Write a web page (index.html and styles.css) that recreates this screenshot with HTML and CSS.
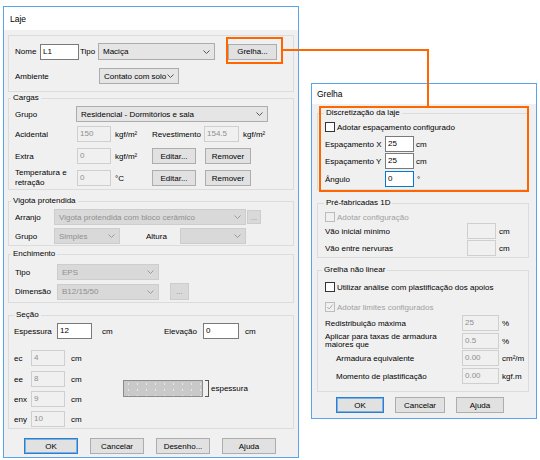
FILE: index.html
```html
<!DOCTYPE html>
<html lang="pt">
<head>
<meta charset="utf-8">
<title>Laje / Grelha</title>
<link rel="stylesheet" href="styles.css">
</head>
<body>
<div class="desk">

  <section class="win win-laje">
    <header class="titlebar">Laje</header>
    <div class="body">
      <div class="topbox">
        <div class="row row-17">
          <span class="lbl w25">Nome</span>
          <span class="field w39">L1</span>
          <span class="lbl w18 ml1">Tipo</span>
          <span class="combo w117 h17">Maciça<svg class="chev" viewBox="0 0 7 4" width="7" height="4"><polyline points="0.5,0.5 3.5,3.5 6.5,0.5"/></svg></span>
          <span class="btn w49 ml13">Grelha...</span>
        </div>
        <div class="row mt8">
          <span class="lbl w84">Ambiente</span>
          <span class="combo w80">Contato com solo<svg class="chev" viewBox="0 0 7 4" width="7" height="4"><polyline points="0.5,0.5 3.5,3.5 6.5,0.5"/></svg></span>
        </div>
      </div>

      <fieldset class="group g-cargas">
        <legend>Cargas</legend>
        <div class="row">
          <span class="lbl w61">Grupo</span>
          <span class="combo w192">Residencial - Dormitórios e sala<svg class="chev" viewBox="0 0 7 4" width="7" height="4"><polyline points="0.5,0.5 3.5,3.5 6.5,0.5"/></svg></span>
        </div>
        <div class="row mt4">
          <span class="lbl w62">Acidental</span>
          <span class="field off w34">150</span>
          <span class="unit w37 ml4">kgf/m²</span>
          <span class="lbl w52">Revestimento</span>
          <span class="field off w35">154.5</span>
          <span class="unit ml4">kgf/m²</span>
        </div>
        <div class="row mt6">
          <span class="lbl w62">Extra</span>
          <span class="field off w34">0</span>
          <span class="unit w37 ml4">kgf/m²</span>
          <span class="btn w44">Editar...</span>
          <span class="btn w46 ml9">Remover</span>
        </div>
        <div class="row row-20 mt4">
          <span class="lbl w62 two">Temperatura e<br>retração</span>
          <span class="field off w34">0</span>
          <span class="unit w37 ml4">°C</span>
          <span class="btn w44">Editar...</span>
          <span class="btn w46 ml9">Remover</span>
        </div>
      </fieldset>

      <fieldset class="group g-vigota">
        <legend>Vigota protendida</legend>
        <div class="row">
          <span class="lbl w39">Arranjo</span>
          <span class="combo off w192">Vigota protendida com bloco cerâmico<svg class="chev" viewBox="0 0 7 4" width="7" height="4"><polyline points="0.5,0.5 3.5,3.5 6.5,0.5"/></svg></span>
          <span class="btn off w14 h14 ml1">...</span>
        </div>
        <div class="row mt3">
          <span class="lbl w39">Grupo</span>
          <span class="combo off w66">Simples<svg class="chev" viewBox="0 0 7 4" width="7" height="4"><polyline points="0.5,0.5 3.5,3.5 6.5,0.5"/></svg></span>
          <span class="lbl w34 ml26">Altura</span>
          <span class="combo off w66"><svg class="chev" viewBox="0 0 7 4" width="7" height="4"><polyline points="0.5,0.5 3.5,3.5 6.5,0.5"/></svg></span>
        </div>
      </fieldset>

      <fieldset class="group g-enchimento">
        <legend>Enchimento</legend>
        <div class="row">
          <span class="lbl w42">Tipo</span>
          <span class="combo off w102">EPS<svg class="chev" viewBox="0 0 7 4" width="7" height="4"><polyline points="0.5,0.5 3.5,3.5 6.5,0.5"/></svg></span>
        </div>
        <div class="row row-17 mt3">
          <span class="lbl w42">Dimensão</span>
          <span class="combo off w102">B12/15/50<svg class="chev" viewBox="0 0 7 4" width="7" height="4"><polyline points="0.5,0.5 3.5,3.5 6.5,0.5"/></svg></span>
          <span class="btn off w19 h17 ml11">...</span>
        </div>
      </fieldset>

      <fieldset class="group g-secao">
        <legend>Seção</legend>
        <div class="row">
          <span class="lbl w43">Espessura</span>
          <span class="field w35">12</span>
          <span class="unit w62 ml10">cm</span>
          <span class="lbl w39">Elevação</span>
          <span class="field w36">0</span>
          <span class="unit ml6">cm</span>
        </div>
        <div class="sec-lower">
          <div class="sec-col">
            <div class="row"><span class="lbl w17">ec</span><span class="field off w34">4</span><span class="unit ml6">cm</span></div>
            <div class="row mt5"><span class="lbl w17">ee</span><span class="field off w34">8</span><span class="unit ml6">cm</span></div>
            <div class="row mt4"><span class="lbl w17">enx</span><span class="field off w34">9</span><span class="unit ml6">cm</span></div>
            <div class="row mt4"><span class="lbl w17">eny</span><span class="field off w34">10</span><span class="unit ml6">cm</span></div>
          </div>
          <div class="slab"></div>
          <div class="bracket"></div>
          <span class="unit ml2">espessura</span>
        </div>
      </fieldset>

      <div class="btnbar btnbar-laje">
        <span class="btn default w54">OK</span>
        <span class="btn w54">Cancelar</span>
        <span class="btn w54">Desenho...</span>
        <span class="btn w54">Ajuda</span>
      </div>
    </div>
  </section>

  <section class="win win-grelha">
    <header class="titlebar">Grelha</header>
    <div class="body">
      <fieldset class="group g-disc">
        <legend>Discretização da laje</legend>
        <div class="row chkrow">
          <span class="chk"></span>
          <span class="lbl ml2">Adotar espaçamento configurado</span>
        </div>
        <div class="row mt4">
          <span class="lbl w60">Espaçamento X</span>
          <span class="field w29">25</span>
          <span class="unit ml2">cm</span>
        </div>
        <div class="row mt1">
          <span class="lbl w60">Espaçamento Y</span>
          <span class="field w29">25</span>
          <span class="unit ml2">cm</span>
        </div>
        <div class="row mt2">
          <span class="lbl w60">Ângulo</span>
          <span class="field focus w29">0</span>
          <span class="unit ml3">°</span>
        </div>
      </fieldset>

      <fieldset class="group g-pre">
        <legend>Pré-fabricadas 1D</legend>
        <div class="row chkrow">
          <span class="chk off"></span>
          <span class="lbl ml2 dim">Adotar configuração</span>
        </div>
        <div class="row mt1">
          <span class="lbl w142">Vão inicial mínimo</span>
          <span class="field off w29"></span>
          <span class="unit ml3">cm</span>
        </div>
        <div class="row mt1">
          <span class="lbl w142">Vão entre nervuras</span>
          <span class="field off w29"></span>
          <span class="unit ml3">cm</span>
        </div>
      </fieldset>

      <fieldset class="group g-nlin">
        <legend>Grelha não linear</legend>
        <div class="row chkrow">
          <span class="chk"></span>
          <span class="lbl ml2">Utilizar análise com plastificação dos apoios</span>
        </div>
        <div class="row chkrow mt10">
          <span class="chk off"><svg viewBox="0 0 10 10" width="8" height="8"><polyline points="1.5,5 4,7.5 8.5,2"/></svg></span>
          <span class="lbl ml2 dim">Adotar limites configurados</span>
        </div>
        <div class="row mt3">
          <span class="lbl w137">Redistribuição máxima</span>
          <span class="field off w37">25</span>
          <span class="unit ml3">%</span>
        </div>
        <div class="row mt2">
          <span class="lbl w137 tight">Aplicar para taxas de armadura<br>maiores que</span>
          <span class="field off w37">0.5</span>
          <span class="unit ml3">%</span>
        </div>
        <div class="row mt1">
          <span class="lbl w137 indent">Armadura equivalente</span>
          <span class="field off w37">0.00</span>
          <span class="unit ml3">cm²/m</span>
        </div>
        <div class="row mt2">
          <span class="lbl w137 indent">Momento de plastificação</span>
          <span class="field off w37">0.00</span>
          <span class="unit ml3">kgf.m</span>
        </div>
      </fieldset>

      <div class="btnbar btnbar-grelha">
        <span class="btn default w48">OK</span>
        <span class="btn w50">Cancelar</span>
        <span class="btn w48">Ajuda</span>
      </div>
    </div>
  </section>

  <div class="hl hl-btn"></div>
  <div class="hl hl-group"></div>
  <div class="wire wire-h"></div>
  <div class="wire wire-v"></div>
</div>
</body>
</html>
```

FILE: styles.css
```css
* { box-sizing: border-box; }
html, body { margin: 0; padding: 0; background: #fff; }
body {
  font-family: "Liberation Sans", Arial, sans-serif;
  font-size: 8px;
  color: #000;
}
.desk { position: relative; width: 540px; height: 460px; overflow: hidden; }

/* windows on the desktop */
.win {
  position: absolute;
  display: flex;
  flex-direction: column;
  border: 1px solid #5aa5ea;
  background: #f0f0f0;
}
.win-laje { left: 3px; top: 6px; width: 296px; height: 452px; }
.win-grelha { left: 311px; top: 83px; width: 226px; height: 336px; }

.titlebar {
  background: #fff;
  height: 23px;
  line-height: 24px;
  padding-left: 6px;
  font-size: 8.5px;
}
.win-grelha .titlebar { height: 20px; line-height: 21px; padding-left: 5px; }

.body { flex: 1; padding: 5px 4px 0 4px; }
.win-grelha .body { padding: 4px 7px 0 5px; }

/* group boxes */
.topbox {
  border: 1px solid #dcdcdc;
  height: 57px;
  padding: 7px 0 0 6px;
}
.group {
  margin: 0;
  padding: 0;
  min-width: 0;
  border: 1px solid #dcdcdc;
}
.group legend { padding: 0 2px; margin-left: 2px; line-height: 10px; }

.g-cargas { margin-top: 1px; padding: 3px 0 1px; }
.g-vigota { margin-top: 6px; padding: 3px 0 1px; }
.g-enchimento { margin-top: 3px; padding: 5px 0 2px; }
.g-secao { margin-top: 7px; padding: 3px 0 1px; }
.g-secao legend { margin-left: 5px; }

.g-disc { padding: 4px 0 2px; }
.g-disc legend, .g-pre legend { margin-left: 6px; }
.g-pre { margin-top: 8px; padding: 4px 0 1px; }
.g-nlin { margin-top: 7px; padding: 7px 0 7px; }
.g-nlin legend { margin-left: 4px; }

/* rows */
.row { display: flex; align-items: center; height: 16px; padding-left: 6px; }
.topbox .row { padding-left: 0; }
.g-secao .row { padding-left: 5px; }
.win-grelha .row { padding-left: 7px; }
.row-17 { height: 17px; }
.row-20 { height: 20px; }
.chkrow { height: 10px; }

.lbl, .unit { flex: none; white-space: nowrap; }
.lbl.two { line-height: 10px; }
.lbl.tight { line-height: 8px; }
.lbl.indent { padding-left: 11px; }
.dim { color: #a0a0a0; }

/* controls */
.field {
  flex: none;
  height: 16px;
  line-height: 14px;
  padding-left: 2px;
  border: 1px solid #7a7a7a;
  background: #fff;
  white-space: nowrap;
}
.field.off { border-color: #cfcfcf; background: #f0f0f0; color: #8f8f8f; }
.field.focus { border-color: #0078d7; }

.combo {
  flex: none;
  display: flex;
  align-items: center;
  height: 16px;
  padding-left: 4px;
  border: 1px solid #acacac;
  background: #e5e5e5;
  white-space: nowrap;
}
.combo .chev { margin-left: auto; margin-right: 4px; flex: none; }
.combo .chev polyline { fill: none; stroke: #555; stroke-width: 1; }
.combo.off { background: #d9d9d9; border-color: #cdcdcd; color: #8f8f8f; }
.combo.off .chev polyline { stroke: #9a9a9a; }

.btn {
  flex: none;
  display: flex;
  align-items: center;
  justify-content: center;
  height: 16px;
  border: 1px solid #adadad;
  background: #e1e1e1;
  white-space: nowrap;
}
.btn.off { background: #d9d9d9; border-color: #cdcdcd; color: #8f8f8f; }
.btn.default { border-color: #2a7fd4; box-shadow: inset 0 0 0 1px rgba(0, 120, 215, 0.45); }

.chk {
  flex: none;
  width: 10px;
  height: 10px;
  border: 1px solid #333;
  background: #fff;
  display: flex;
  align-items: center;
  justify-content: center;
}
.chk.off { border-color: #bcbcbc; background: #f0f0f0; }
.chk svg polyline { fill: none; stroke: #a8a8a8; stroke-width: 1.2; }

/* seção drawing */
.sec-lower { display: flex; align-items: center; margin-top: 11px; }
.sec-col { width: 114px; flex: none; }
.slab {
  flex: none;
  width: 80px;
  height: 17px;
  border: 1px solid #8c8c8c;
  background-color: #c9c9c9;
  background-image: radial-gradient(circle, #e8e8e8 0.5px, transparent 0.9px);
  background-size: 9px 6px;
}
.bracket {
  flex: none;
  width: 4px;
  height: 17px;
  margin-left: 2px;
  border: 1px solid #555;
  border-left: none;
}

/* button bars */
.btnbar { display: flex; }
.btnbar-laje { margin-top: 9px; padding-left: 16px; gap: 12px; }
.btnbar-grelha { margin-top: 5px; padding-left: 19px; gap: 11px; }

/* widths */
.w14 { width: 14px; } .w17 { width: 17px; } .w18 { width: 18px; } .w19 { width: 19px; }
.w25 { width: 25px; } .w29 { width: 29px; } .w34 { width: 34px; } .w35 { width: 35px; }
.w36 { width: 36px; } .w37 { width: 37px; } .w39 { width: 39px; } .w42 { width: 42px; }
.w43 { width: 43px; } .w44 { width: 44px; } .w46 { width: 46px; } .w48 { width: 48px; }
.w49 { width: 49px; } .w50 { width: 50px; } .w52 { width: 52px; } .w54 { width: 54px; }
.w60 { width: 60px; } .w61 { width: 61px; } .w62 { width: 62px; } .w66 { width: 66px; }
.w80 { width: 80px; } .w84 { width: 84px; } .w102 { width: 102px; } .w117 { width: 117px; }
.w137 { width: 137px; } .w142 { width: 142px; } .w192 { width: 192px; }
.h14 { height: 14px; } .h17 { height: 17px; }

/* spacing */
.ml1 { margin-left: 1px; } .ml2 { margin-left: 2px; } .ml3 { margin-left: 3px; }
.ml4 { margin-left: 4px; } .ml6 { margin-left: 6px; } .ml9 { margin-left: 9px; }
.ml10 { margin-left: 10px; } .ml11 { margin-left: 11px; } .ml13 { margin-left: 13px; }
.ml26 { margin-left: 26px; }
.mt1 { margin-top: 1px; } .mt2 { margin-top: 2px; } .mt3 { margin-top: 3px; }
.mt4 { margin-top: 4px; } .mt5 { margin-top: 5px; } .mt6 { margin-top: 6px; }
.mt8 { margin-top: 8px; } .mt10 { margin-top: 10px; }

/* orange callouts over the screenshots */
.hl { position: absolute; border: 2px solid #ff6600; z-index: 2; }
.hl-btn { left: 226px; top: 37px; width: 57px; height: 27px; }
.hl-group { left: 319px; top: 106px; width: 210px; height: 86px; }
.wire { position: absolute; background: #ff6600; z-index: 2; }
.wire-h { left: 283px; top: 49px; width: 146px; height: 2px; }
.wire-v { left: 427px; top: 49px; width: 2px; height: 57px; }
```
